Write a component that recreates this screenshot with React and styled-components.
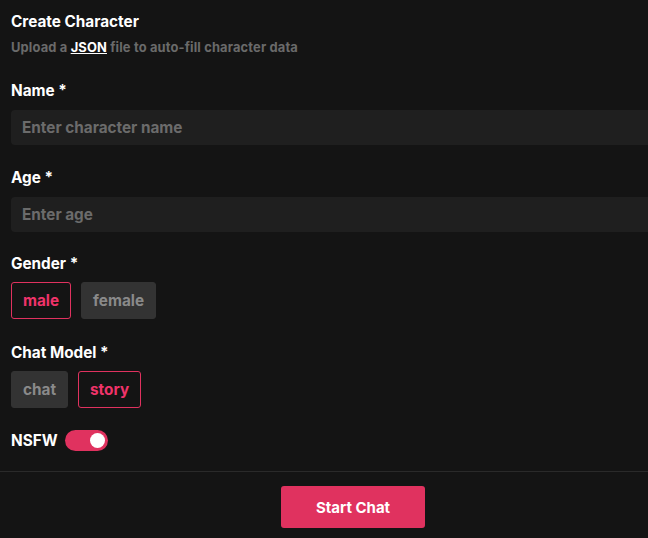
import React, { useState } from 'react';
import styled, { createGlobalStyle } from 'styled-components';

const Global = createGlobalStyle`
	html, body {
		margin: 0;
		padding: 0;
		background: #141414;
		overflow: hidden;
	}
	body {
		font-family: Inter, "Noto Sans", sans-serif;
	}
`;

const Page = styled.div`
	width: 706px;
	height: 538px;
	background: #141414;
	display: flex;
	flex-direction: column;
`;

const Form = styled.div`
	flex: 1;
	padding: 13px 11px 0 11px;
	display: flex;
	flex-direction: column;
`;

const Title = styled.h1`
	margin: 0;
	font-size: 15.3px;
	line-height: 18px;
	font-weight: 700;
	color: #ffffff;
`;

const Subtitle = styled.p`
	margin: 9px 0 0;
	font-size: 12.9px;
	letter-spacing: 0.15px;
	line-height: 16px;
	font-weight: 700;
	color: #6a6a6a;

	a {
		color: #ffffff;
		text-decoration: underline;
	}
`;

const Field = styled.div`
	display: flex;
	flex-direction: column;
	margin-top: ${p => p.$top}px;
`;

const Label = styled.label`
	font-size: 15.3px;
	line-height: 18px;
	font-weight: 700;
	color: #ffffff;
`;

const Input = styled.input`
	box-sizing: border-box;
	margin-top: 10px;
	width: 100%;
	height: 35px;
	border: none;
	border-radius: 4px;
	background: #1f1f1f;
	padding: 0 11px;
	font-family: inherit;
	font-size: 15.3px;
	font-weight: 700;
	color: #ffffff;
	outline: none;

	&::placeholder {
		color: #6b6b6b;
	}
`;

const Options = styled.div`
	display: flex;
	gap: 10px;
	margin-top: 9px;
`;

const Option = styled.button`
	box-sizing: border-box;
	height: 37px;
	padding: 0 11px;
	border-radius: 3px;
	font-family: inherit;
	font-size: 15.3px;
	font-weight: 700;
	cursor: pointer;
	border: 1px solid ${p => (p.$active ? '#e0325f' : '#333333')};
	background: ${p => (p.$active ? 'transparent' : '#333333')};
	color: ${p => (p.$active ? '#f0336a' : '#8a8a8a')};
`;

const ToggleRow = styled.div`
	display: flex;
	align-items: center;
	gap: 7px;
	margin-top: 22px;
`;

const Switch = styled.button`
	position: relative;
	width: 43px;
	height: 21px;
	border: none;
	border-radius: 11px;
	padding: 0;
	background: ${p => (p.$on ? '#e0325f' : '#444444')};
	cursor: pointer;

	&::after {
		content: '';
		position: absolute;
		top: 3px;
		left: ${p => (p.$on ? '25px' : '3px')};
		width: 15px;
		height: 15px;
		border-radius: 50%;
		background: #ffffff;
	}
`;

const Footer = styled.div`
	border-top: 1px solid #2a2a2a;
	height: 67px;
	display: flex;
	justify-content: center;
	padding-top: 14px;
	box-sizing: border-box;
`;

const StartButton = styled.button`
	width: 144px;
	height: 42px;
	border: none;
	border-radius: 3px;
	background: #e0325f;
	color: #ffffff;
	font-family: inherit;
	font-size: 15px;
	font-weight: 700;
	cursor: pointer;
`;

export default function App() {
	const [gender, setGender] = useState('male');
	const [model, setModel] = useState('story');
	const [nsfw, setNsfw] = useState(true);

	return (
		<Page>
			<Global />
			<Form>
				<Title>Create Character</Title>
				<Subtitle>
					Upload a <a href="#json">JSON</a> file to auto-fill character data
				</Subtitle>
				<Field $top={26}>
					<Label>Name *</Label>
					<Input placeholder="Enter character name" />
				</Field>
				<Field $top={24}>
					<Label>Age *</Label>
					<Input placeholder="Enter age" />
				</Field>
				<Field $top={23}>
					<Label>Gender *</Label>
					<Options>
						{['male', 'female'].map(g => (
							<Option key={g} $active={gender === g} onClick={() => setGender(g)}>
								{g}
							</Option>
						))}
					</Options>
				</Field>
				<Field $top={25}>
					<Label>Chat Model *</Label>
					<Options>
						{['chat', 'story'].map(m => (
							<Option key={m} $active={model === m} onClick={() => setModel(m)}>
								{m}
							</Option>
						))}
					</Options>
				</Field>
				<ToggleRow>
					<Label>NSFW</Label>
					<Switch $on={nsfw} onClick={() => setNsfw(!nsfw)} />
				</ToggleRow>
			</Form>
			<Footer>
				<StartButton>Start Chat</StartButton>
			</Footer>
		</Page>
	);
}
